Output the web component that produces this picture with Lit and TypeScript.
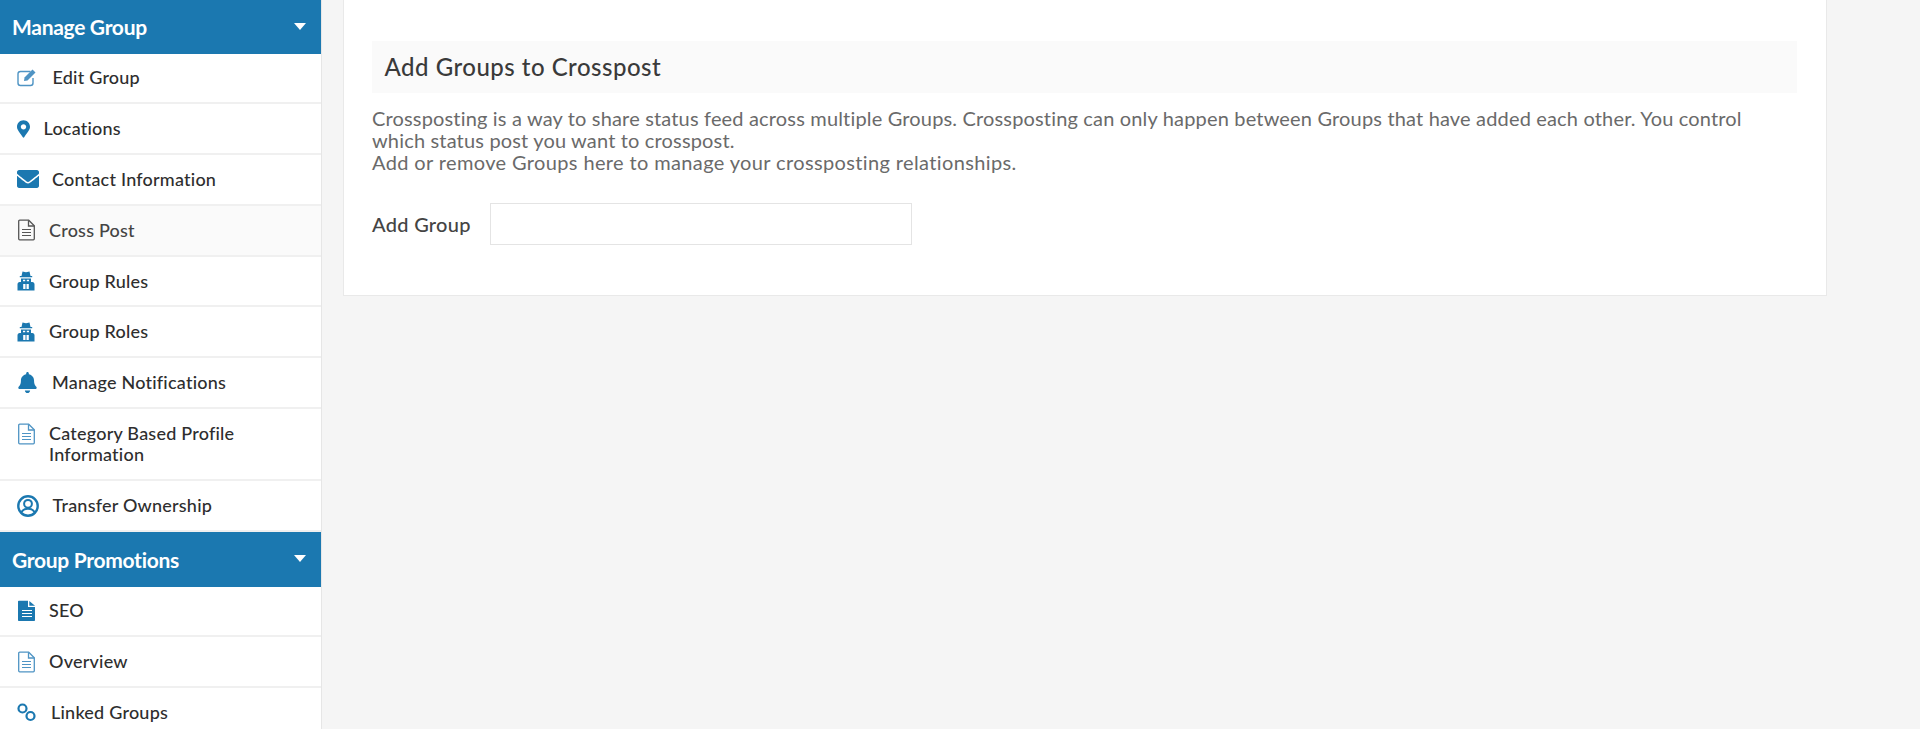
import { LitElement, html, css, svg } from "lit";
import { customElement } from "lit/decorators.js";

const icons: Record<string, unknown> = {
  edit: svg`<svg viewBox="2 3 21 19" width="21" height="19" fill="none" stroke="#4f94c4" stroke-width="1.4"><path d="M15.5 6.5H5.5a2.5 2.5 0 0 0-2.5 2.5v9a2.5 2.5 0 0 0 2.5 2.5h10a2.5 2.5 0 0 0 2.5-2.5v-5"/><path d="M9.500 12.500 17.500 4.500l3 3-8 8-3.500.6z" fill="#4f94c4" stroke="none"/></svg>`,
  marker: svg`<svg viewBox="0 0 384 512" width="13" height="18" fill="#1b78b0"><path d="M172.268 501.67C26.97 291.031 0 262.429 0 192 0 85.961 85.961 0 192 0s192 85.961 192 192c0 70.429-26.97 99.031-172.268 309.67-9.535 13.774-29.93 13.773-39.464 0zM192 272c44.183 0 80-35.817 80-80s-35.817-80-80-80-80 35.817-80 80 35.817 80 80 80z"/></svg>`,
  envelope: svg`<svg viewBox="0 64 512 384" width="22" height="18" preserveAspectRatio="none" fill="#1b78b0"><path d="M502.3 190.8c3.9-3.1 9.7-.2 9.7 4.7V400c0 26.5-21.5 48-48 48H48c-26.5 0-48-21.5-48-48V195.6c0-5 5.7-7.8 9.7-4.7 22.4 17.4 52.1 39.5 154.1 113.6 21.1 15.4 56.7 47.8 92.2 47.6 35.7.3 72-32.8 92.3-47.6 102-74.1 131.6-96.3 154-113.7zM256 320c23.2.4 56.6-29.2 73.4-41.4 132.7-96.3 142.8-104.7 173.4-128.7 5.8-4.5 9.2-11.5 9.2-18.9v-19c0-26.5-21.5-48-48-48H48C21.5 64 0 85.5 0 112v19c0 7.4 3.4 14.3 9.2 18.9 30.6 23.9 40.7 32.4 173.4 128.7 16.8 12.2 50.2 41.8 73.4 41.4z"/></svg>`,
  fileDark: svg`<svg viewBox="0 0 19 22" width="19" height="22" fill="none" stroke="#555" stroke-width="1.3"><path d="M1.7 2.2a1 1 0 0 1 1-1h9l5.6 5.6v13a1 1 0 0 1-1 1H2.700a1 1 0 0 1-1-1z"/><path d="M11.500 1.500v5.500h5.800"/><path d="M5 10.500h9M5 13.500h9M5 16.500h9" stroke-width="1.200"/></svg>`,
  fileLight: svg`<svg viewBox="0 0 19 22" width="19" height="22" fill="none" stroke="#4f94c4" stroke-width="1.3"><path d="M1.7 2.2a1 1 0 0 1 1-1h9l5.6 5.6v13a1 1 0 0 1-1 1H2.700a1 1 0 0 1-1-1z"/><path d="M11.500 1.500v5.500h5.800"/><path d="M5 10.500h9M5 13.500h9M5 16.500h9" stroke-width="1.200"/></svg>`,
  fileSolid: svg`<svg viewBox="0 0 19 22" width="19" height="22"><path fill="#1b78b0" d="M1 1.500a.8.800 0 0 1 .8-.8H11v6.300h7v13.200a.8.800 0 0 1-.8.800H1.800a.8.800 0 0 1-.8-.8z"/><path fill="#1b78b0" d="M12.300.9 18 5.700h-5.700z"/><path stroke="#fff" stroke-width="1.200" d="M5 10.500h10M5 13.500h10M5 16.500h10"/></svg>`,
  secret: svg`<svg viewBox="0 0 18 20" width="18" height="20"><path fill="#1b78b0" d="M5.500.5 9 1.200 12.500.5l1 4.500h1.700v1.200H2.800V5h1.700z"/><path fill="#1b78b0" fill-rule="evenodd" d="M4 7.500h10v3.500h1.300c1.400 0 2.200 1 2.200 2.300v6.200H.5v-6.200C.5 12 1.300 11 2.700 11H4zM6 8.800v1.500h2.200V8.800zm3.800 0v1.500H12V8.800zM6.200 13v5h2.300v-5zm3.300 0v5h2.300v-5z"/></svg>`,
  bell: svg`<svg viewBox="-24 0 472 512" width="20" height="21" fill="#1b78b0"><path d="M224 512c35.32 0 63.97-28.65 63.97-64H160.03c0 35.35 28.65 64 63.97 64zm215.39-149.71c-19.32-20.76-55.47-51.99-55.47-154.29 0-77.7-54.48-139.9-127.94-155.16V32c0-17.67-14.32-32-31.98-32s-31.98 14.33-31.98 32v20.84C118.56 68.1 64.08 130.3 64.08 208c0 102.3-36.15 133.53-55.47 154.29-6 6.45-8.66 14.16-8.61 21.71.11 16.4 12.98 32 32.1 32h383.8c19.12 0 32-15.6 32.1-32 .05-7.55-2.61-15.27-8.61-21.71z"/></svg>`,
  user: svg`<svg viewBox="0 0 22 22" width="22" height="22" fill="none"><circle cx="11" cy="11" r="9.700" stroke="#1b78b0" stroke-width="2.400"/><circle cx="11" cy="8.800" r="3.900" stroke="#1b78b0" stroke-width="2"/><path d="M4.500 17.500c1-2.700 3.500-3.700 6.500-3.700s5.500 1 6.500 3.700" stroke="#1b78b0" stroke-width="2"/></svg>`,
  link: svg`<svg viewBox="0 0 20 20" width="20" height="20" fill="none" stroke="#1b78b0" stroke-width="2.200"><circle cx="5.500" cy="5.500" r="4"/><circle cx="13.500" cy="13" r="4"/></svg>`,
};

interface Item { label: string; icon: string; gap: number; active?: boolean }
const manage: Item[] = [
  { label: "Edit Group", icon: "edit", gap: 35.5 },
  { label: "Locations", icon: "marker", gap: 26.5 },
  { label: "Contact Information", icon: "envelope", gap: 35 },
  { label: "Cross Post", icon: "fileDark", gap: 32, active: true },
  { label: "Group Rules", icon: "secret", gap: 32 },
  { label: "Group Roles", icon: "secret", gap: 32 },
  { label: "Manage Notifications", icon: "bell", gap: 35 },
  { label: "Category Based Profile Information", icon: "fileLight", gap: 32 },
  { label: "Transfer Ownership", icon: "user", gap: 35.5 },
];
const promo: Item[] = [
  { label: "SEO", icon: "fileSolid", gap: 32 },
  { label: "Overview", icon: "fileLight", gap: 32 },
  { label: "Linked Groups", icon: "link", gap: 34 },
];

@customElement("app-root")
export class AppRoot extends LitElement {
  static styles = css`
    :host {
      display: block;
      height: 729px;
      overflow: hidden;
      background: #f5f5f5;
      font-family: Lato, "Liberation Sans", sans-serif;
      color: #333;
    }
    .page { display: flex; align-items: flex-start; }
    .side {
      width: 321px;
      flex: none;
      background: #fff;
      border-right: 1px solid #e6e6e6;
    }
    .head {
      height: 53.500px;
      background: #1b78b0;
      color: #fff;
      display: flex;
      align-items: center;
      justify-content: space-between;
      padding: 0 15px 0 12px;
      box-sizing: border-box;
      font-size: 21px;
      font-weight: 700;
      letter-spacing: -0.3px;
    }
    .head.second { height: 54.500px; }
    .caret {
      width: 0;
      height: 0;
      border-left: 6.500px solid transparent;
      border-right: 6.500px solid transparent;
      border-top: 7px solid #fff;
      margin-bottom: 1px;
    }
    .row {
      min-height: 48.800px;
      border-bottom: 2px solid #f0f0f0;
      display: flex;
      align-items: center;
      padding-left: 17px;
      font-size: 18px;
      line-height: 21px;
      font-weight: 500;
      letter-spacing: 0.22px;
      color: #2e2e2e;
    }
    .row:last-child { border-bottom: none; }
    .row.two { align-items: flex-start; padding-top: 14.100px; padding-bottom: 14.100px; min-height: 0; }
    .row.active { background: #fafafa; color: #444; }
    .ic { display: flex; flex: none; align-items: center; }
    .main { flex: 1; min-width: 0; padding-left: 21px; }
    .card {
      width: 1484px;
      box-sizing: border-box;
      background: #fff;
      border: solid #e9e9e9;
      border-width: 0 1px 1px 1px;
      padding: 40.500px 29px 50px 28px;
    }
    .title {
      height: 52px;
      background: #fafafa;
      display: flex;
      align-items: center;
      padding-left: 12.500px;
      font-size: 24px;
      font-weight: 500;
      letter-spacing: 0.5px;
      color: #3a3a3a;
    }
    .desc {
      margin: 14px 0 0;
      font-size: 20px;
      line-height: 22.400px;
      letter-spacing: 0.165px;
      color: #6a6a6a;
    }
    .tail { letter-spacing: 0.37px; }
    .field { display: flex; align-items: center; margin-top: 29.500px; }
    .field label { width: 118px; font-size: 20px; font-weight: 500; letter-spacing: 0.3px; color: #444; }
    .input {
      width: 422px;
      height: 42px;
      box-sizing: border-box;
      border: 1px solid #e4e4e4;
      background: #fff;
    }
  `;

  private row(it: Item) {
    const two = it.label.length > 25;
    return html`<div class="row ${it.active ? "active" : ""} ${two ? "two" : ""}">
      <span class="ic" style="width:${it.gap}px">${icons[it.icon]}</span>
      <span>${it.label}</span>
    </div>`;
  }

  render() {
    return html`<div class="page">
      <aside class="side">
        <div class="head"><span>Manage Group</span><span class="caret"></span></div>
        ${manage.map((i) => this.row(i))}
        <div class="head second"><span>Group Promotions</span><span class="caret"></span></div>
        ${promo.map((i) => this.row(i))}
      </aside>
      <main class="main">
        <section class="card">
          <div class="title">Add Groups to Crosspost</div>
          <p class="desc">Crossposting is a way to share status feed across multiple Groups. Crossposting can only happen between Groups that have added each other. You control which status post you want to crosspost.<br /><span class="tail">Add or remove Groups here to manage your crossposting relationships.</span></p>
          <div class="field"><label>Add Group</label><div class="input"></div></div>
        </section>
      </main>
    </div>`;
  }
}
